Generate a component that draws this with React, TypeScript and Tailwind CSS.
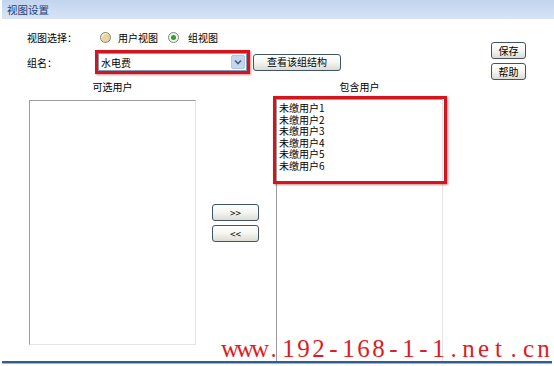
const users = ["未缴用户1", "未缴用户2", "未缴用户3", "未缴用户4", "未缴用户5", "未缴用户6"];

const watermark = "www.192-168-1-1.net.cn".split("");

const btn =
  "flex items-center justify-center rounded-[3px] border border-[#3f5468] bg-linear-to-b from-white via-[#f5f5f1] to-[#dcdcd3] text-[10px] leading-none text-black";

const listBox =
  "border border-t-[#9c9c9c] border-l-[#9c9c9c] border-r-[#e4e4e4] border-b-[#e4e4e4] bg-white";

export default function App() {
  return (
    <div className="relative flex h-[366px] w-[554px] flex-col overflow-hidden bg-white font-['Noto_Sans_CJK_SC',sans-serif] text-[10px] text-black">
      {/* title bar */}
      <div className="ml-[2px] flex h-[20px] items-center bg-linear-to-b from-[#c2d4ee] to-[#d7e4f6] pl-[5px] text-[10.5px] text-[#1d3d75]">
        视图设置
      </div>

      {/* form rows + save/help */}
      <div className="flex items-start justify-between">
        <div className="pl-[27px]">
          <div className="mt-[10px] flex h-[16px] items-center">
            <span className="w-[73px]">视图选择：</span>
            <span className="h-[11px] w-[11px] rounded-full border border-[#858574] bg-[#e6d5a2] shadow-[inset_1px_1px_1px_#fff6dc]" />
            <span className="ml-[7px]">用户视图</span>
            <span className="ml-[10px] flex h-[11px] w-[11px] items-center justify-center rounded-full border border-[#7b8a7b] bg-[#f4f4ee]">
              <span className="h-[5px] w-[5px] rounded-full bg-[#2f9f36]" />
            </span>
            <span className="ml-[9px]">组视图</span>
          </div>

          <div className="mt-[5px] flex items-center">
            <span className="w-[68px]">组名：</span>
            <div className="border-[3px] border-[#d3161d] shadow-[1px_1px_2px_rgba(120,0,0,0.45)]">
              <div className="flex h-[18px] w-[149px] items-center justify-between border border-[#7f9db9] bg-white">
                <span className="pl-[2px]">水电费</span>
                <span className="mr-px flex h-[14px] w-[14px] items-center justify-center rounded-[2px] border border-[#b4c6e3] bg-[#c6d6ef]">
                  <svg width="8" height="6" viewBox="0 0 8 6">
                    <path d="M1 1.5 L4 4.5 L7 1.5" fill="none" stroke="#4b5f86" strokeWidth="1.6" />
                  </svg>
                </span>
              </div>
            </div>
            <button className={`${btn} ml-[3px] h-[17px] w-[88px]`}>查看该组结构</button>
          </div>
        </div>

        <div className="mr-[28px] mt-[23px] flex flex-col gap-[4px]">
          <button className={`${btn} h-[17px] w-[35px]`}>保存</button>
          <button className={`${btn} h-[17px] w-[35px]`}>帮助</button>
        </div>
      </div>

      {/* user lists */}
      <div className="mt-[1px] flex items-start pl-[29px]">
        <div className="w-[167px]">
          <div className="h-[12px] text-center leading-[12px]">可选用户</div>
          <div className={`${listBox} mt-[7px] h-[245px]`} />
        </div>

        <div className="ml-[16px] mt-[123px] flex w-[47px] flex-col gap-[4px]">
          <button className={`${btn} h-[17px] w-[47px]`}>&gt;&gt;</button>
          <button className={`${btn} h-[17px] w-[47px]`}>&lt;&lt;</button>
        </div>

        <div className="relative ml-[17px] w-[167px]">
          <div className="h-[12px] text-center leading-[12px]">包含用户</div>
          <div className={`${listBox} mt-[6px] h-[262px] border-b-0 pl-[2px] pt-[2px] text-[10px] leading-[11.6px]`}>
            {users.map((u) => (
              <div key={u}>{u}</div>
            ))}
          </div>
          <div className="absolute left-[-3px] top-[15px] h-[88px] w-[174px] border-[3px] border-[#d3161d] shadow-[1px_1px_2px_rgba(120,0,0,0.45)]" />
        </div>
      </div>

      <div className="mx-[2px] mb-[2px] mt-auto h-[3px] border-t-2 border-[#2e5f90] bg-[#9bb5cf]" />

      {/* site watermark, fixed-pitch cells */}
      <div className="absolute left-[221px] top-[336px] flex font-['Liberation_Serif',serif] text-[25px] leading-none text-[#e01a22]">
        {watermark.map((c, i) => (
          <span key={i} className="inline-block w-[15px] text-center">
            {c}
          </span>
        ))}
      </div>
    </div>
  );
}
